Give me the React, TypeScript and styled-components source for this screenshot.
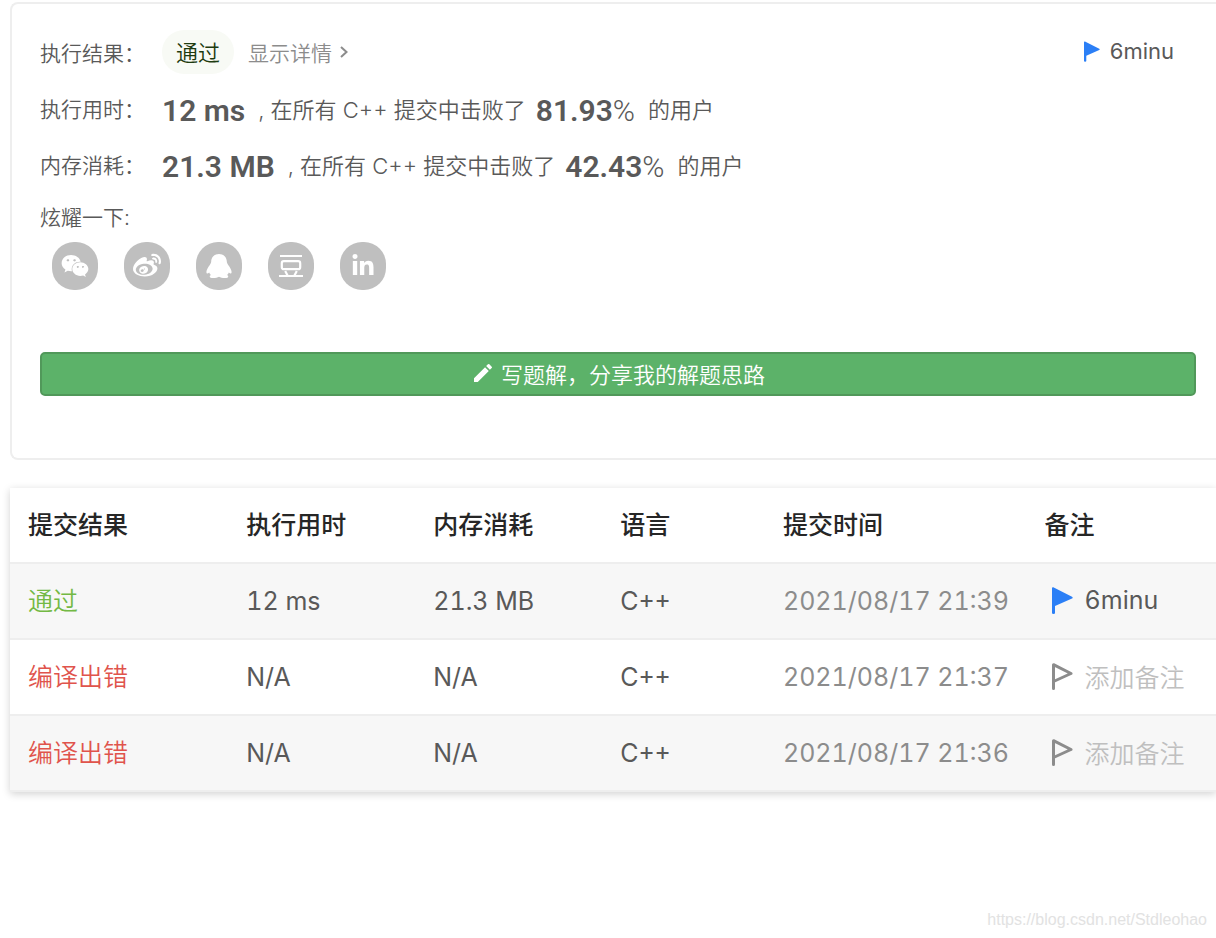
import React from 'react';
import styled, { createGlobalStyle } from 'styled-components';
import { FaWeixin, FaWeibo, FaLinkedinIn } from 'react-icons/fa';
import { MdEdit } from 'react-icons/md';

const GlobalStyle = createGlobalStyle`
  *, *::before, *::after { box-sizing: border-box; }
  body {
    margin: 0;
    background: #fff;
    color: #595959;
    font-family: Inter, "Noto Sans CJK SC", sans-serif;
    font-size: 22px;
    font-weight: 350;
    overflow-x: hidden;
  }
`;

const Page = styled.div`
  display: flex;
  flex-direction: column;
  min-height: 100vh;
  padding: 2px 0 6px 10px;
`;

const ResultCard = styled.section`
  padding: 26px 20px 62px 28px;
  border: 2px solid #eeeeee;
  border-right: none;
  border-radius: 8px 0 0 8px;
`;

const ResultHeader = styled.div`
  display: flex;
  align-items: center;
  height: 44px;
  margin-bottom: 6px;
  padding-right: 22px;
`;

const StatRow = styled.div`
  display: flex;
  align-items: center;
  height: 56px;
  white-space: pre;
`;

const Label = styled.span`
  flex: none;
  width: 122px;
  font-size: 21px;
`;

const Passed = styled.span`
  display: flex;
  align-items: center;
  height: 44px;
  padding: 0 14px 2px;
  border-radius: 22px;
  background: #f8faf5;
  color: #1d3b0f;
`;

const DetailLink = styled.a`
  display: flex;
  align-items: center;
  gap: 8px;
  margin-left: 14px;
  color: #8c8c8c;
  font-size: 21px;
  text-decoration: none;
`;

const Note = styled.button<{ $large?: boolean; $empty?: boolean }>`
  display: flex;
  align-items: center;
  gap: ${(p) => (p.$large ? 12 : 10)}px;
  margin-left: ${(p) => (p.$large ? '7px' : 'auto')};
  padding: 0 0 2px;
  border: none;
  background: none;
  color: ${(p) => (p.$empty ? '#bfbfbf' : '#595959')};
  font: inherit;
  font-weight: ${(p) => (p.$empty ? 350 : 400)};
  white-space: nowrap;
  cursor: pointer;
`;

const Figure = styled.strong`
  padding-top: 4px;
  font-family: Roboto, sans-serif;
  font-size: 30px;
  font-weight: 600;
`;

const Percent = styled(Figure).attrs({ as: 'span' })`
  font-weight: 300;
`;

const Phrase = styled.span`
  margin: 0 10px 0 13px;
`;

const ShareLabel = styled.div`
  display: flex;
  align-items: center;
  height: 32px;
  margin: 8px 0 10px;
  font-size: 21px;
`;

const ShareList = styled.div`
  display: flex;
  gap: 26px;
  padding-left: 12px;
`;

const ShareButton = styled.button`
  display: flex;
  align-items: center;
  justify-content: center;
  width: 46px;
  height: 48px;
  padding: 0;
  border: none;
  border-radius: 22px;
  background: #bfbfbf;
  color: #fff;
  cursor: pointer;
`;

const WriteButton = styled.button`
  display: flex;
  align-items: center;
  justify-content: center;
  gap: 6px;
  width: 100%;
  height: 44px;
  margin-top: 62px;
  padding: 0 0 2px;
  border: 2px solid #51985a;
  border-radius: 5px;
  background: #5cb269;
  color: #fff;
  font: inherit;
  cursor: pointer;
`;

const History = styled.table`
  width: 100%;
  margin-top: 28px;
  border-spacing: 0;
  table-layout: fixed;
  box-shadow: 0 2px 8px rgba(0, 0, 0, 0.18);
  font-size: 25px;
  font-variant-numeric: tabular-nums;
`;

const Row = styled.tr<{ $shaded?: boolean }>`
  background: ${(p) => (p.$shaded ? '#f7f7f7' : '#fff')};
`;

const HeadCell = styled.th<{ $width?: string }>`
  width: ${(p) => p.$width ?? 'auto'};
  height: 76px;
  padding: 0 0 4px 18px;
  border-bottom: 2px solid #eeeeee;
  color: #262626;
  font-weight: 500;
  text-align: left;
`;

const Cell = styled.td<{ $color?: string }>`
  height: 76px;
  padding: 0 0 0 18px;
  border-bottom: 2px solid #eeeeee;
  color: ${(p) => p.$color ?? '#595959'};
  font-weight: 400;
  white-space: nowrap;
`;

const StatusCell = styled(Cell)`
  padding-bottom: 4px;
  font-weight: 350;
`;

const StatusLink = styled.a<{ $ok: boolean }>`
  color: ${(p) => (p.$ok ? '#73b944' : '#e0544c')};
  text-decoration: none;
`;

const Watermark = styled.footer`
  margin-top: auto;
  padding-right: 9px;
  color: #e2e2e2;
  font-family: "Liberation Sans", Arial, sans-serif;
  font-size: 16px;
  font-weight: 400;
  line-height: 24px;
  text-align: right;
`;

function Flag({ filled, width, height }: { filled?: boolean; width: number; height: number }) {
  return filled ? (
    <svg width={width} height={height} viewBox="0 0 21 27" fill="#2b7ff6" aria-hidden="true">
      <path d="M0 1.2Q0 0 1.3 0.3L20 9.8Q21.4 10.7 20 11.5L3 19V26Q3 27 1.5 27Q0 27 0 26Z" />
    </svg>
  ) : (
    <svg width={width} height={height} viewBox="0 0 21 27" fill="none" stroke="#8c8c8c" strokeWidth="3" strokeLinecap="round" strokeLinejoin="round" aria-hidden="true">
      <path d="M1.5 25.5V1.7L19 10.5L1.5 18.5" />
    </svg>
  );
}

function Penguin() {
  return (
    <svg width="28" height="26" viewBox="0 0 28 26" fill="#fff" aria-hidden="true">
      <path d="M14 1C9.2 1 6.3 4.4 6.2 8.6C6.1 10 5.6 10.8 4.8 12C3 14.5 1.4 17 1.4 19C1.6 21 2.6 20.9 4.2 19.4C4.6 20.4 5.2 21.2 6 22C4.6 22.6 4.4 23.6 5.2 24.4C6.8 25.4 11.6 25.2 14 23.8C16.4 25.2 21.2 25.4 22.8 24.4C23.6 23.6 23.4 22.6 22 22C22.8 21.2 23.4 20.4 23.8 19.4C25.4 20.9 26.4 21 26.6 19C26.6 17 25 14.5 23.2 12C22.4 10.8 21.9 10 21.8 8.6C21.7 4.4 18.8 1 14 1Z" />
    </svg>
  );
}

function Douban() {
  return (
    <svg width="26" height="24" viewBox="0 0 26 24" fill="none" stroke="#fff" strokeWidth="2.2" aria-hidden="true">
      <path d="M2 2H24M1 22H25M7.2 17L9.8 22M18.8 17L16.2 22" />
      <rect x="3.8" y="7.2" width="18.4" height="8" rx="2" />
    </svg>
  );
}

const shares = [
  { name: '微信', icon: <FaWeixin size={28} /> },
  { name: '微博', icon: <FaWeibo size={28} /> },
  { name: 'QQ', icon: <Penguin /> },
  { name: '豆瓣', icon: <Douban /> },
  { name: 'LinkedIn', icon: <FaLinkedinIn size={24} /> },
];

const stats = [
  { label: '执行用时：', value: '12 ms', percent: '81.93' },
  { label: '内存消耗：', value: '21.3 MB', percent: '42.43' },
];

const columns = [
  { title: '提交结果', width: '18.1%' },
  { title: '执行用时', width: '15.5%' },
  { title: '内存消耗', width: '15.5%' },
  { title: '语言', width: '13.5%' },
  { title: '提交时间', width: '21.7%' },
  { title: '备注' },
];

const submissions = [
  { status: '通过', ok: true, time: '12 ms', memory: '21.3 MB', date: '2021/08/17 21:39', note: '6minu' },
  { status: '编译出错', ok: false, time: 'N/A', memory: 'N/A', date: '2021/08/17 21:37', note: '' },
  { status: '编译出错', ok: false, time: 'N/A', memory: 'N/A', date: '2021/08/17 21:36', note: '' },
];

export default function App() {
  return (
    <Page lang="zh-CN">
      <GlobalStyle />
      <ResultCard>
        <ResultHeader>
          <Label>执行结果：</Label>
          <Passed>通过</Passed>
          <DetailLink href="#detail">
            显示详情
            <svg width="8" height="12" viewBox="0 0 8 12" fill="none" stroke="currentColor" strokeWidth="2" aria-hidden="true">
              <path d="M1 1L6.5 6L1 11" />
            </svg>
          </DetailLink>
          <Note type="button">
            <Flag filled width={16} height={21} />
            6minu
          </Note>
        </ResultHeader>
        {stats.map((s) => (
          <StatRow key={s.label}>
            <Label>{s.label}</Label>
            <Figure>{s.value}</Figure>
            <Phrase>, 在所有 C++ 提交中击败了</Phrase>
            <Figure>{s.percent}</Figure>
            <Percent>%</Percent>
            <Phrase>的用户</Phrase>
          </StatRow>
        ))}
        <ShareLabel>炫耀一下:</ShareLabel>
        <ShareList>
          {shares.map((s) => (
            <ShareButton key={s.name} type="button" aria-label={s.name}>
              {s.icon}
            </ShareButton>
          ))}
        </ShareList>
        <WriteButton type="button">
          <MdEdit size={24} />
          写题解，分享我的解题思路
        </WriteButton>
      </ResultCard>
      <History>
        <thead>
          <Row>
            {columns.map((c) => (
              <HeadCell key={c.title} scope="col" $width={c.width}>
                {c.title}
              </HeadCell>
            ))}
          </Row>
        </thead>
        <tbody>
          {submissions.map((s, i) => (
            <Row key={s.date} $shaded={i % 2 === 0}>
              <StatusCell>
                <StatusLink href="#submission" $ok={s.ok}>
                  {s.status}
                </StatusLink>
              </StatusCell>
              <Cell>{s.time}</Cell>
              <Cell>{s.memory}</Cell>
              <Cell>C++</Cell>
              <Cell $color="#8c8c8c">{s.date}</Cell>
              <Cell>
                <Note type="button" $large $empty={!s.note}>
                  <Flag filled={!!s.note} width={21} height={27} />
                  {s.note || '添加备注'}
                </Note>
              </Cell>
            </Row>
          ))}
        </tbody>
      </History>
      <Watermark>https://blog.csdn.net/Stdleohao</Watermark>
    </Page>
  );
}
